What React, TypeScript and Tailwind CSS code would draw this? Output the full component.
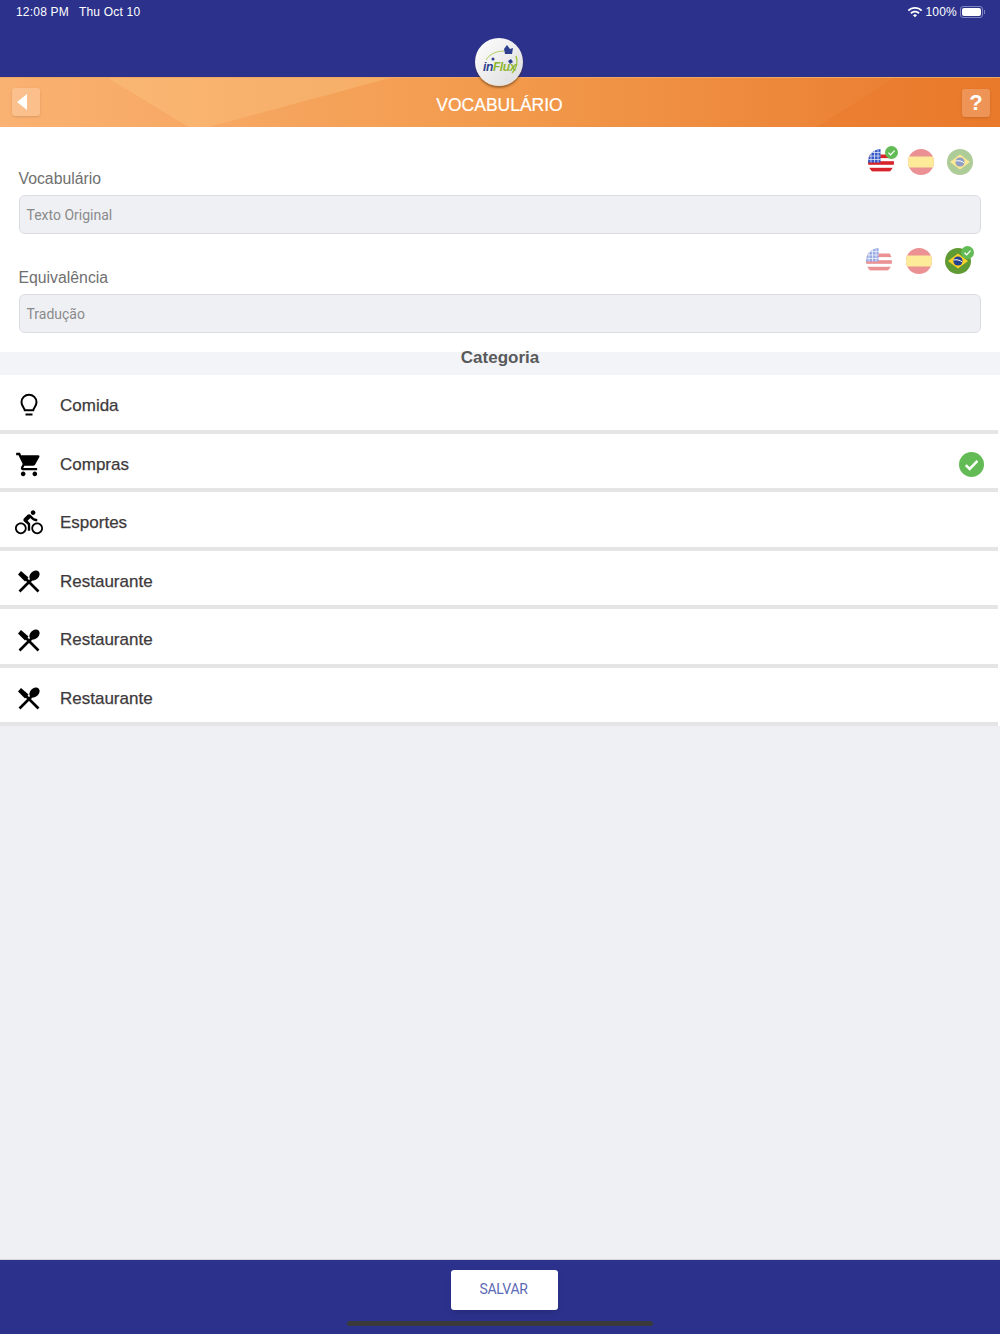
import { MdDirectionsBike, MdShoppingCart, MdWifi } from "react-icons/md";

const CATEGORIES = [
  { name: "Comida", icon: "bulb" },
  { name: "Compras", icon: "cart", checked: true },
  { name: "Esportes", icon: "bike" },
  { name: "Restaurante", icon: "food" },
  { name: "Restaurante", icon: "food" },
  { name: "Restaurante", icon: "food" },
];

function Check({ className }: { className: string }) {
  return (
    <svg viewBox="0 0 24 24" className={className}>
      <circle cx="12" cy="12" r="12" fill="#62bb54" />
      <path d="M6.5 12.5l3.8 3.8 7.4-7.8" fill="none" stroke="#fff" strokeWidth="2.4" />
    </svg>
  );
}

function FlagUS({ faded }: { faded?: boolean }) {
  return (
    <svg viewBox="0 0 26 26" className={`h-[26px] w-[26px] ${faded ? "opacity-50" : ""}`}>
      <defs>
        <clipPath id="usclip"><circle cx="13" cy="13" r="13" /></clipPath>
      </defs>
      <g clipPath="url(#usclip)">
        <rect width="26" height="26" fill="#fff" />
        <rect y="5.500" width="26" height="3.600" fill="#d8232a" />
        <rect y="12.200" width="26" height="3.600" fill="#d8232a" />
        <rect y="18.800" width="26" height="3.600" fill="#d8232a" />
        <rect width="12.500" height="13.500" fill="#3559c7" />
        <path d="M0 3.500h12.500M0 7h12.500M0 10.500h12.500M3 0v13.500M6.500 0v13.500M10 0v13.500" stroke="#dfe4f7" strokeWidth="0.800" />
      </g>
    </svg>
  );
}

function FlagES() {
  return (
    <svg viewBox="0 0 26 26" className="h-[26px] w-[26px] opacity-50">
      <defs>
        <clipPath id="esclip"><circle cx="13" cy="13" r="13" /></clipPath>
      </defs>
      <g clipPath="url(#esclip)">
        <rect width="26" height="26" fill="#d8232a" />
        <rect y="7.500" width="26" height="11" fill="#fdd835" />
      </g>
    </svg>
  );
}

function FlagBR({ faded }: { faded?: boolean }) {
  return (
    <svg viewBox="0 0 26 26" className={`h-[26px] w-[26px] ${faded ? "opacity-50" : ""}`}>
      <circle cx="13" cy="13" r="13" fill="#5f9a32" />
      <path d="M13 5.500L23 13l-10 7.500L3 13z" fill="#fbd02b" />
      <circle cx="13" cy="13" r="4.600" fill="#24408e" />
      <path d="M8.600 12c3-.7 6.300 0 8.700 2" fill="none" stroke="#fff" strokeWidth="1" />
    </svg>
  );
}

function CategoryIcon({ icon }: { icon: string }) {
  if (icon === "cart") return <MdShoppingCart className="h-[29px] w-[29px] text-black" />;
  if (icon === "bike") return <MdDirectionsBike className="h-[31px] w-[31px] text-black" />;
  if (icon === "bulb") {
    return (
      <svg viewBox="0 0 24 26" className="h-[26px] w-[24px]">
        <path d="M7.800 17.300C7.500 14.800 4.500 13.300 4.500 9.200a7.500 7.500 0 0 1 15 0c0 4.100-3 5.600-3.300 8.100z" fill="none" stroke="#000" strokeWidth="2" />
        <path d="M8.500 21.500h7" stroke="#000" strokeWidth="2" />
      </svg>
    );
  }
  return (
    <svg viewBox="0 0 24 24" className="h-[24px] w-[24px]">
      <path d="M2.500 22.500L15 10" stroke="#000" strokeWidth="2.600" />
      <ellipse cx="17.500" cy="6.500" rx="4.300" ry="5.800" transform="rotate(45 17.500 6.500)" fill="#000" />
      <path d="M21.500 22.500L8 9" stroke="#000" strokeWidth="2.600" />
      <path d="M1 5.500L4 2 11.500 8.500 8 12.500z" fill="#000" />
    </svg>
  );
}

function Field({ label, placeholder, flags, flagsClass }: { label: string; placeholder: string; flags: React.ReactNode; flagsClass: string }) {
  return (
    <div>
      <div className="flex h-[68px] items-start justify-between">
        <div className="mt-[42px] text-[15.800px] leading-[20px] text-[#707070]">{label}</div>
        <div className={`flex items-center ${flagsClass}`}>{flags}</div>
      </div>
      <div className="flex h-[39px] items-center rounded-[6px] border border-[#dcdde0] bg-[#eff0f4] px-[7px] pt-[1px] font-['Roboto',sans-serif] text-[14px] text-[#8a8a8c]">
        {placeholder}
      </div>
    </div>
  );
}

export default function App() {
  return (
    <div className="flex h-[1334px] w-[1000px] flex-col bg-[#eff0f4] font-['Liberation_Sans',sans-serif]">
      {/* status bar + logo */}
      <div className="relative h-[77px] bg-[#2c328c]">
        <div className="flex items-center justify-between pl-[16px] pr-[15px] pt-[4px] text-[12px] leading-[16px] tracking-[0.2px] text-white">
          <div className="flex gap-[10px]">
            <span>12:08 PM</span>
            <span>Thu Oct 10</span>
          </div>
          <div className="flex items-center gap-[3px]">
            <MdWifi className="h-[16px] w-[16px]" />
            <span>100%</span>
            <div className="flex h-[12px] w-[23px] items-center rounded-[3px] border border-[#7f84bd] p-[1px]">
              <div className="h-full w-full rounded-[2px] bg-white" />
            </div>
            <div className="-ml-[2px] h-[4px] w-[1px] bg-[#7f84bd]" />
          </div>
        </div>
        <div className="absolute left-[475px] top-[38px] z-10 h-[48px] w-[48px] rounded-full bg-gradient-to-br from-white to-[#dcdcdc] shadow-[0_2px_2px_rgba(80,50,20,0.5)]">
          <svg viewBox="0 0 48 48" className="h-[48px] w-[48px]">
            <path d="M11 22a19 14 0 0 1 18-9" fill="none" stroke="#9fc53b" strokeWidth="0.800" />
            <path d="M41 18a16 16 0 0 1-4 17" fill="none" stroke="#9fc53b" strokeWidth="1.500" />
            <path d="M29 11l3-4 3 4 3-1-1 6h-7z" fill="#2c3f8f" />
            <circle cx="18" cy="21" r="1.500" fill="#2c3f8f" />
            <path d="M33 23l3-2 2 3-3 2z" fill="#2c3f8f" />
          </svg>
          <span className="absolute left-[8px] top-[23px] text-[12px] font-bold italic leading-[12px] tracking-[-0.4px] text-[#2c3f8f]">
            in<span className="text-[#8cb52f]">Flux</span>
          </span>
        </div>
      </div>

      {/* orange title bar */}
      <div className="relative flex h-[50px] items-center justify-between overflow-hidden border-t border-[#f0a860] bg-gradient-to-r from-[#fab272] via-[#f29a4c] to-[#e9792b] pl-[12px] pr-[10px]">
        <svg viewBox="0 0 1000 50" className="absolute inset-0 h-[50px] w-[1000px]">
          <path d="M108 0H390L205 50H190z" fill="#fbc07f" opacity="0.45" />
          <path d="M815 50L895 0h105v50z" fill="#e9792b" opacity="0.5" />
        </svg>
        <div className="relative mb-[2px] flex h-[28px] w-[28px] items-center justify-center rounded-[3px] bg-white/20 shadow-sm">
          <div className="mr-[8px] h-0 w-0 border-y-[8px] border-r-[10px] border-y-transparent border-r-white" />
        </div>
        <div className="relative mr-[3px] mt-[6px] text-[17.500px] text-white [-webkit-text-stroke:0.2px_white]">VOCABULÁRIO</div>
        <div className="relative flex h-[28px] w-[28px] items-center justify-center rounded-[3px] bg-white/20 text-[22px] font-bold text-white shadow-sm">?</div>
      </div>

      {/* form */}
      <div className="h-[225px] bg-white pl-[18.500px] pr-[19px]">
        <Field
          label="Vocabulário"
          placeholder="Texto Original"
          flagsClass="mr-[8px] mt-[22px] gap-[13.500px]"
          flags={
            <>
              <div className="relative">
                <FlagUS />
                <Check className="absolute -right-[4px] -top-[3px] h-[13px] w-[13px]" />
              </div>
              <FlagES />
              <FlagBR faded />
            </>
          }
        />
        <div className="-mt-[8px]">
          <Field
            label="Equivalência"
            placeholder="Tradução"
            flagsClass="mr-[10px] mt-[22px] gap-[13.500px]"
            flags={
              <>
                <FlagUS faded />
                <FlagES />
                <div className="relative">
                  <FlagBR />
                  <Check className="absolute -right-[3px] -top-[2px] h-[13px] w-[13px]" />
                </div>
              </>
            }
          />
        </div>
      </div>

      <div className="h-[23px] bg-[#f3f4f8] text-center text-[17px] font-bold leading-[12px] text-[#58595b]">Categoria</div>

      {/* category list */}
      <div>
        {CATEGORIES.map((c, i) => (
          <div key={i} className="flex h-[58.500px] items-center bg-white">
            <div className="mr-[2px] flex h-full flex-1 items-center border-b-[4px] border-[#e5e5e5] pl-[15px] pr-[13px] pt-[7px]">
              <div className="flex w-[28px] justify-center"><CategoryIcon icon={c.icon} /></div>
              <div className="ml-[17px] flex-1 text-[17px] text-[#3e3a3c] [-webkit-text-stroke:0.25px_#3e3a3c]">{c.name}</div>
              {c.checked && <Check className="mr-[1px] h-[25px] w-[25px]" />}
            </div>
          </div>
        ))}
      </div>

      {/* footer */}
      <div className="relative mt-auto flex h-[75px] justify-center border-t border-[#d5d6da] bg-[#2c328c] pt-[10px]">
        <div className="ml-[9px] flex h-[40px] w-[107px] items-center justify-center rounded-[3px] bg-white pb-[1px] pr-[2px] font-['Roboto',sans-serif] text-[14px] tracking-[-0.3px] text-[#5c6bb5] shadow-md">SALVAR</div>
        <div className="absolute bottom-[8px] left-[347px] h-[5px] w-[306px] rounded-full bg-[#3a3a3c]" />
      </div>
    </div>
  );
}
